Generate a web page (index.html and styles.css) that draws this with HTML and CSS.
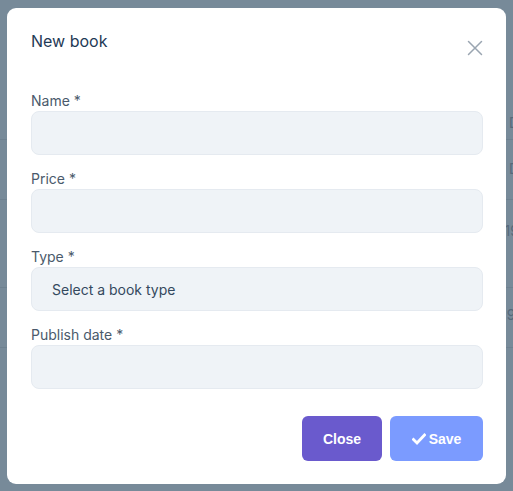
FILE: index.html
```html
<!DOCTYPE html>
<html>
<head>
<meta charset="utf-8">
<link rel="stylesheet" href="styles.css">
</head>
<body>
<div class="page">
  <div class="row r1"><span class="cell">D</span></div>
  <div class="row r2"><span class="cell">D</span></div>
  <div class="row r3"><span class="cell">19</span></div>
  <div class="row r4"><span class="cell">9.</span></div>
</div>
<div class="overlay">
  <div class="dialog">
    <div class="header">
      <h2 class="title">New book</h2>
      <button class="close-x" aria-label="Close">
        <svg width="16" height="16" viewBox="0 0 16 16"><path d="M1.5 1.5 L14.5 14.5 M14.5 1.5 L1.5 14.5" stroke="#9aa5b1" stroke-width="1.5" fill="none" stroke-linecap="round"/></svg>
      </button>
    </div>
    <div class="form">
      <div class="field">
        <label class="label">Name *</label>
        <div class="input"></div>
      </div>
      <div class="field">
        <label class="label">Price *</label>
        <div class="input"></div>
      </div>
      <div class="field">
        <label class="label">Type *</label>
        <div class="input select">Select a book type</div>
      </div>
      <div class="field">
        <label class="label">Publish date *</label>
        <div class="input"></div>
      </div>
    </div>
    <div class="footer">
      <button class="btn btn-close">Close</button>
      <button class="btn btn-save"><svg width="14" height="12" viewBox="0 0 14 12"><path d="M1.5 6.5 L5 10 L12.5 2" stroke="#fff" stroke-width="2.8" fill="none" stroke-linecap="square"/></svg>Save</button>
    </div>
  </div>
</div>
</body>
</html>
```
FILE: styles.css
```css
html, body {
  margin: 0;
  padding: 0;
}
body {
  background: #778a99;
  width: 513px;
  height: 491px;
  overflow: hidden;
  font-family: Inter, "Noto Sans", sans-serif;
}
.page {
  padding-top: 82px;
}
.row {
  border-bottom: 1px solid #6e8190;
  display: flex;
  align-items: flex-start;
  justify-content: flex-end;
  color: #56697a;
  font-size: 14px;
  line-height: 17px;
  box-sizing: border-box;
}
.cell {
  margin-right: -6px;
}
.r1 { height: 58px; padding-top: 32px; }
.r2 { height: 60px; padding-top: 20px; }
.r3 { height: 88px; padding-top: 22px; }
.r4 { height: 60px; padding-top: 18px; }
.overlay {
  position: fixed;
  inset: 0;
}
.dialog {
  position: absolute;
  left: 7px;
  top: 8px;
  width: 499px;
  height: 476px;
  box-sizing: border-box;
  background: #fff;
  border-radius: 9px;
  padding: 22px 23px 23px 24px;
  display: flex;
  flex-direction: column;
}
.header {
  display: flex;
  justify-content: space-between;
  align-items: flex-start;
  height: 22px;
}
.title {
  margin: 0;
  font-size: 16px;
  font-weight: 400;
  line-height: 22px;
  color: #1f3a56;
}
.close-x {
  border: 0;
  background: none;
  padding: 0;
  margin-top: 10px;
  width: 16px;
  height: 16px;
  display: block;
}
.close-x svg { display: block; }
.form {
  margin-top: 39px;
  display: flex;
  flex-direction: column;
  gap: 14px;
}
.field {
  display: flex;
  flex-direction: column;
}
.label {
  font-size: 14px;
  line-height: 20px;
  color: #4a5a6b;
}
.input {
  height: 44px;
  box-sizing: border-box;
  background: #eff3f7;
  border: 1px solid #e5eaf0;
  border-radius: 8px;
}
.select {
  display: flex;
  align-items: center;
  padding-left: 20px;
  font-size: 14px;
  color: #34495e;
}
.footer {
  margin-top: 27px;
  display: flex;
  justify-content: flex-end;
  gap: 8px;
}
.btn {
  height: 45px;
  border: 0;
  border-radius: 6px;
  color: #fff;
  font-family: "Liberation Sans", Arial, sans-serif;
  font-weight: 700;
  font-size: 14px;
  display: flex;
  align-items: center;
  justify-content: center;
  gap: 3px;
  padding: 0;
}
.btn-close {
  width: 80px;
  background: #6a5acd;
}
.btn-save {
  width: 93px;
  background: #7b9bff;
}
.btn-save svg { display: block; }
```
